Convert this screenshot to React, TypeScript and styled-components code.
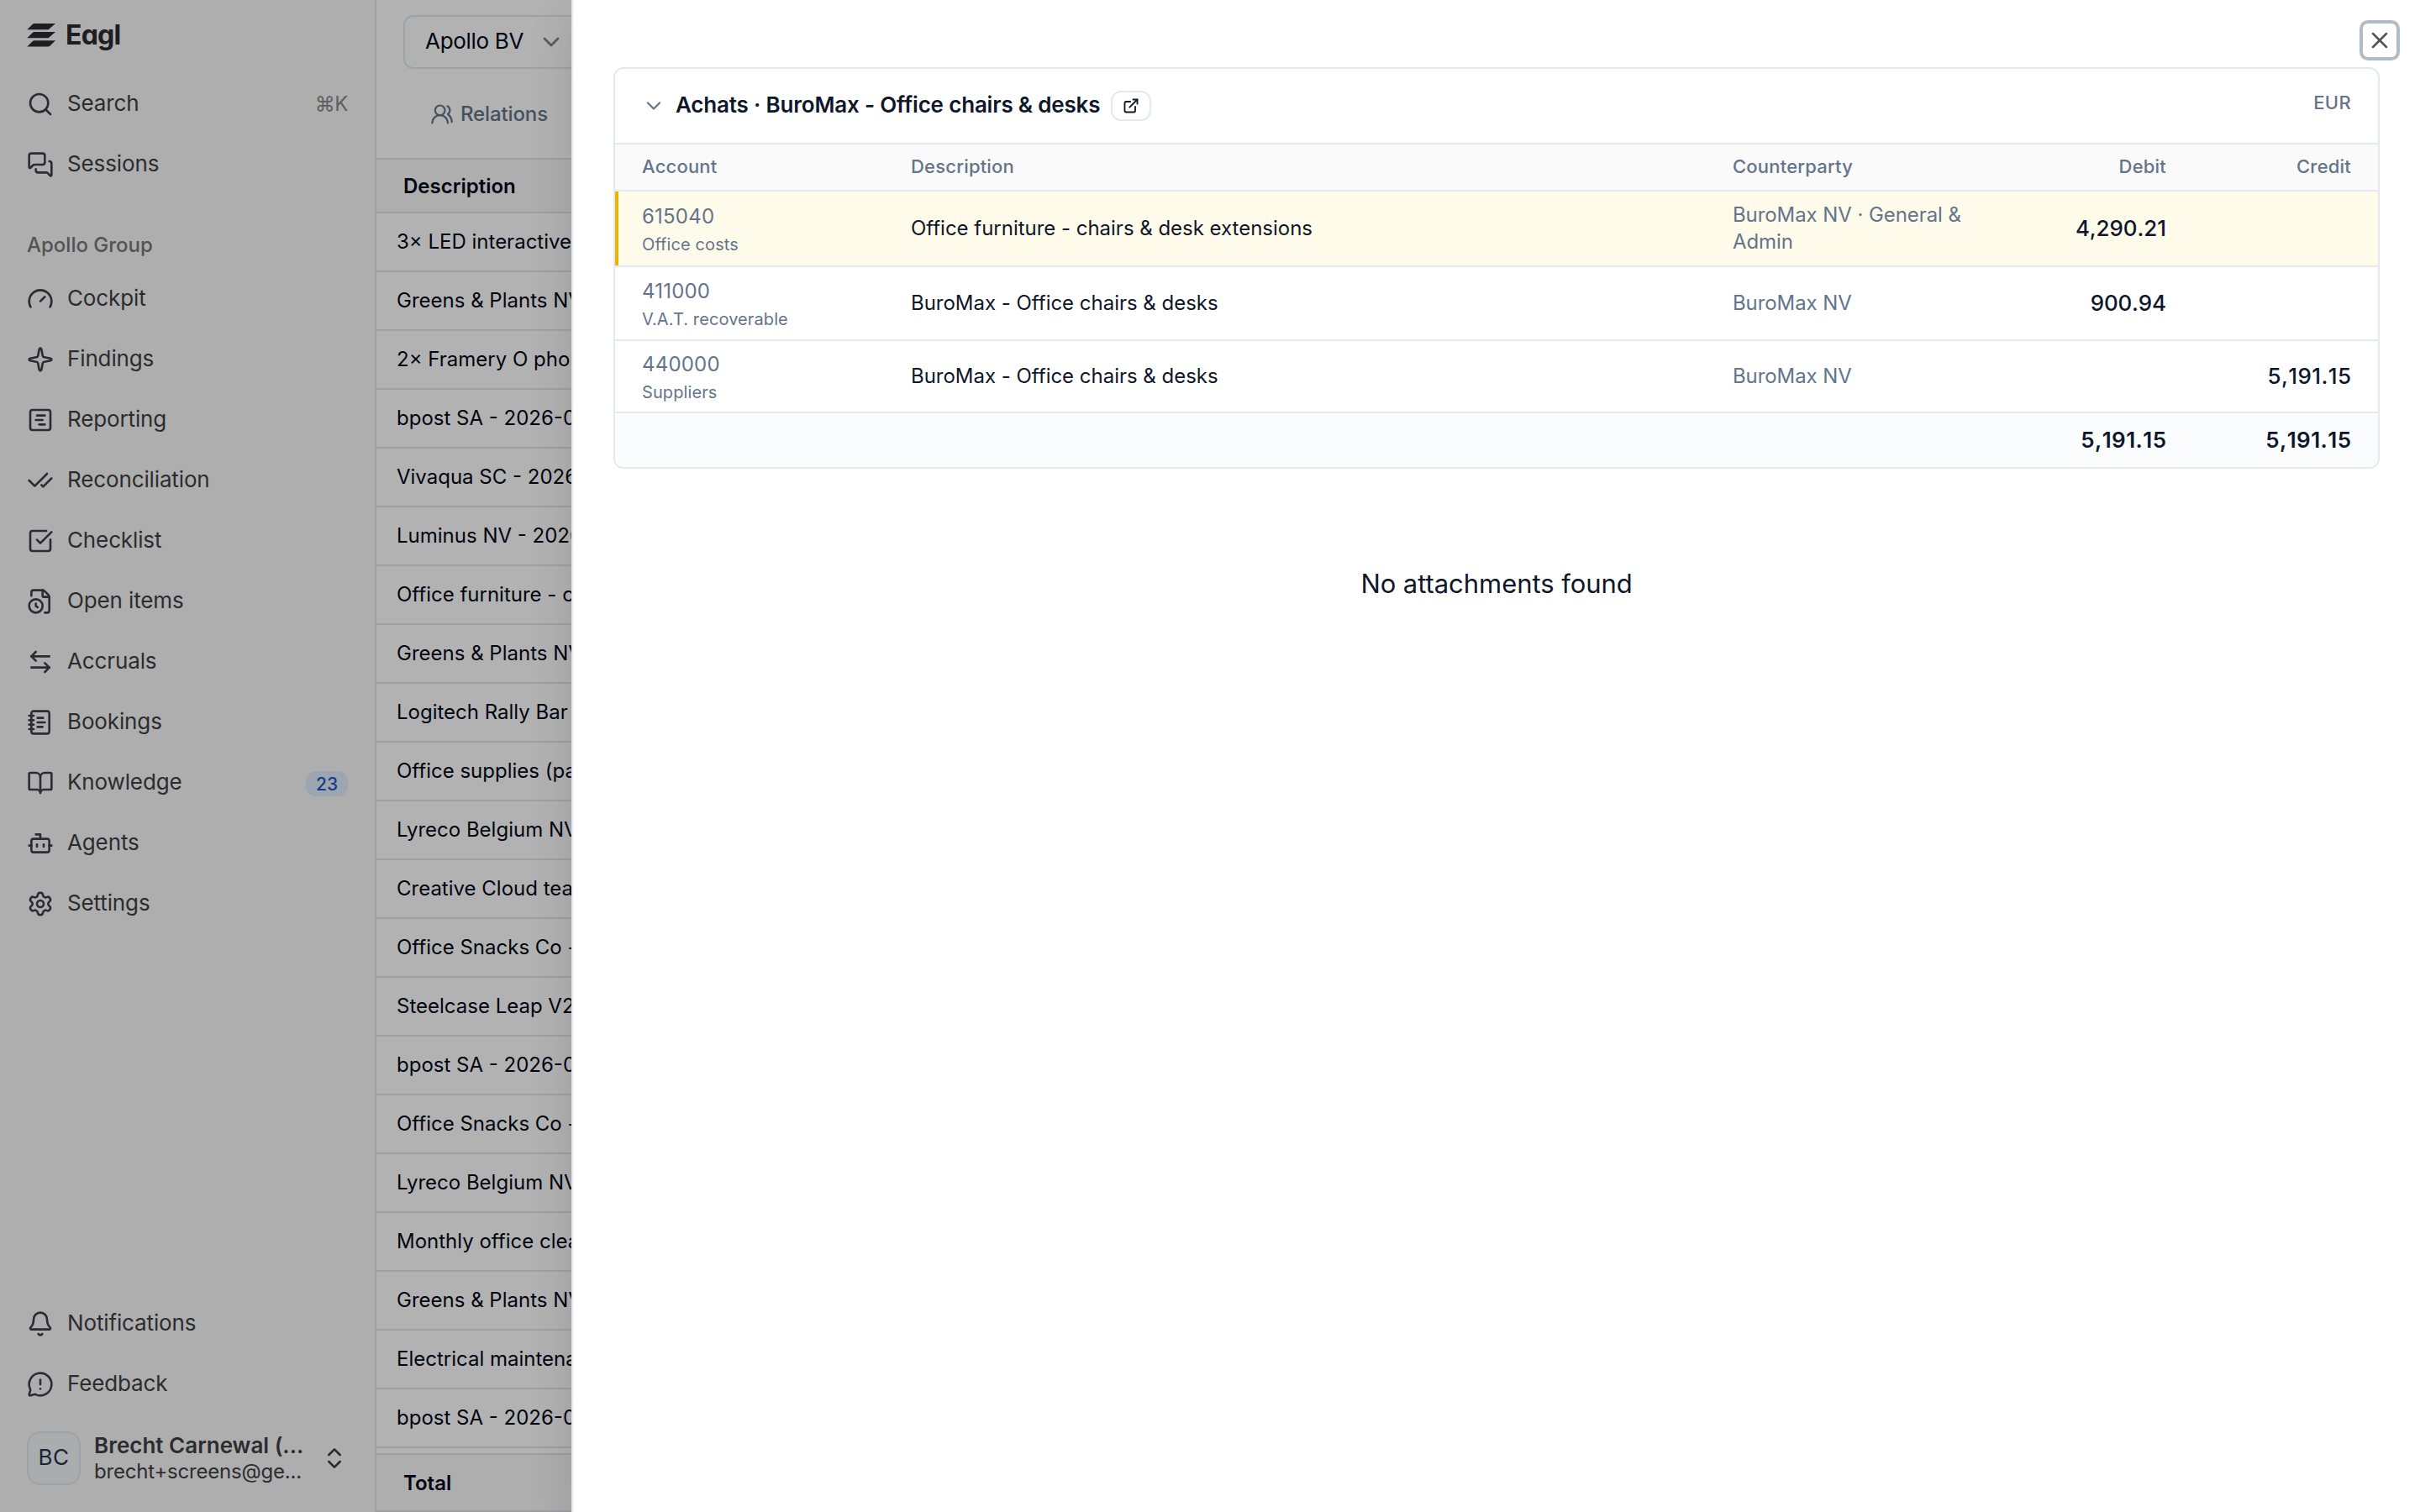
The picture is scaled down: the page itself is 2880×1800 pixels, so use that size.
import React from "react";
import styled, { createGlobalStyle } from "styled-components";
import {
  ArrowLeftRight,
  Bell,
  BookOpen,
  Bot,
  CheckCheck,
  ChevronDown,
  ChevronsUpDown,
  ExternalLink,
  FileClock,
  Gauge,
  MessageCircleWarning,
  MessagesSquare,
  NotebookText,
  Search,
  Settings,
  Sparkle,
  SquareChartGantt,
  SquareCheckBig,
  UsersRound,
  X,
  type LucideIcon,
} from "lucide-react";

const color = {
  border: "#e4e4e7",
  line: "#e5e8ec",
  ink: "#0f172a",
  dark: "#020817",
  muted: "#64748b",
  side: "#3f3f46",
};

const GlobalStyle = createGlobalStyle`
  *, *::before, *::after { box-sizing: border-box; }
  body { margin: 0; overflow: hidden; background: #fff; }
  button { font: inherit; color: inherit; background: none; border: 0; padding: 0; }
  svg { flex: none; display: block; }
`;

const Page = styled.div`
  position: relative;
  display: flex;
  width: 2880px;
  height: 1800px;
  overflow: hidden;
  font-family: Inter, "Liberation Sans", sans-serif;
  font-size: 24px;
  color: ${color.dark};
`;

/* ---------- sidebar ---------- */

const Sidebar = styled.aside`
  display: flex;
  flex-direction: column;
  flex: none;
  width: 448px;
  padding: 16px 32px 32px;
  background: #fafafa;
  border-right: 2px solid ${color.border};
  color: ${color.side};
`;

const Brand = styled.div`
  display: flex;
  align-items: center;
  gap: 10px;
  height: 52px;
  color: #2b2b31;
`;

const BrandName = styled.span`
  font-size: 32px;
  font-weight: 700;
  line-height: 52px;
  letter-spacing: -0.8px;
  font-feature-settings: "cv11";
`;

const NavList = styled.nav`
  display: flex;
  flex-direction: column;
  gap: 8px;
`;

const TopNav = styled(NavList)`
  margin-top: 24px;
`;

const BottomNav = styled(NavList)`
  margin-top: auto;
`;

const NavItem = styled.a`
  display: flex;
  align-items: center;
  gap: 16px;
  height: 64px;
`;

const NavLabel = styled.span`
  flex: 1;
  padding-bottom: 2px;
  font-size: 26px;
  letter-spacing: -0.13px;
  line-height: 36px;
`;

const Shortcut = styled.span`
  padding-bottom: 2px;
  font-size: 24px;
  letter-spacing: -0.4px;
  color: #88888e;
`;

const Badge = styled.span`
  display: grid;
  place-items: center;
  width: 50px;
  height: 30px;
  margin-top: 2px;
  border-radius: 12px;
  background: #e0edfc;
  color: #1c57cc;
  font-size: 21px;
  font-weight: 500;
`;

const GroupLabel = styled.div`
  height: 48px;
  margin: 40px 0 8px;
  font-size: 24px;
  font-weight: 500;
  line-height: 48px;
  color: #77777c;
`;

const User = styled.div`
  display: flex;
  align-items: center;
  margin-top: 24px;
`;

const Avatar = styled.div`
  display: grid;
  place-items: center;
  width: 64px;
  height: 64px;
  padding-bottom: 3px;
  border: 2px solid #e2e8f0;
  border-radius: 16px;
  background: #f4f8fb;
  color: #27344a;
  font-size: 26px;
  letter-spacing: 0.4px;
`;

const UserText = styled.div`
  display: flex;
  flex-direction: column;
  width: 254px;
  margin: 0 16px;
  padding-bottom: 2px;
`;

const UserName = styled.span`
  font-size: 26px;
  font-weight: 600;
  line-height: 34px;
  white-space: nowrap;
`;

const UserMail = styled.span`
  font-size: 24px;
  letter-spacing: -0.2px;
  line-height: 28px;
  white-space: nowrap;
`;

/* ---------- main list ---------- */

const Main = styled.main`
  display: flex;
  flex: 1;
  flex-direction: column;
  min-width: 0;
`;

const Toolbar = styled.div`
  padding: 18px 32px 0;
`;

const EntitySelect = styled.button`
  display: flex;
  align-items: center;
  gap: 17px;
  width: 400px;
  height: 64px;
  padding: 0 24px;
  border: 2px solid #e2e8f0;
  border-radius: 12px;
  font-size: 26px;
  letter-spacing: -0.3px;

  svg { color: #7e828a; }
`;

const EntityName = styled.span`
  padding-bottom: 3px;
`;

const Tabs = styled.div`
  display: flex;
  height: 106px;
  padding: 0 64px;
`;

const Tab = styled.div`
  display: flex;
  align-items: center;
  gap: 8px;
  height: 108px;
  color: ${color.muted};
  font-weight: 500;
  letter-spacing: -0.12px;
  line-height: 32px;
`;

const ListHead = styled.div`
  height: 66px;
  padding: 0 32px;
  border-top: 2px solid ${color.border};
  border-bottom: 2px solid ${color.border};
  background: #fafafa;
  font-weight: 600;
  line-height: 63px;
`;

const ListRow = styled.div`
  height: 70px;
  padding: 0 24px;
  border-bottom: 2px solid ${color.border};
  line-height: 67px;
  white-space: nowrap;
`;

const ListTotal = styled(ListHead)`
  height: 70px;
  margin-top: auto;
  line-height: 67px;
`;

/* ---------- overlay and drawer ---------- */

const Overlay = styled.div`
  position: absolute;
  inset: 0;
  background: rgba(0, 0, 0, 0.3);
`;

const Drawer = styled.section`
  position: absolute;
  inset: 0 0 0 680px;
  padding: 80px 48px 0;
  border-left: 2px solid ${color.line};
  background: #fff;
  box-shadow: 0 20px 50px rgba(0, 0, 0, 0.12);
  color: ${color.ink};
`;

const CloseButton = styled.button`
  position: absolute;
  top: 24px;
  right: 24px;
  display: grid;
  place-items: center;
  width: 48px;
  height: 48px;
  border: 4px solid #b1bcc9;
  border-radius: 10px;
  color: #4f525f;
`;

const Card = styled.div`
  overflow: hidden;
  height: 478px;
  border: 2px solid ${color.line};
  border-radius: 12px;
`;

const CardHead = styled.header`
  display: flex;
  align-items: center;
  height: 90px;
  padding: 0 32px;
  border-bottom: 2px solid ${color.line};

  > svg { color: ${color.muted}; }
`;

const CardTitle = styled.h2`
  margin: 0 13px 0 12px;
  padding-bottom: 2px;
  font-size: 26px;
  font-weight: 600;
  letter-spacing: -0.18px;
  line-height: 36px;
`;

const OpenButton = styled.button`
  display: grid;
  place-items: center;
  width: 48px;
  height: 36px;
  border: 2px solid ${color.line};
  border-radius: 12px;
`;

const Currency = styled.span`
  margin-left: auto;
  padding-bottom: 8px;
  color: ${color.muted};
  font-size: 22px;
  font-weight: 500;
  letter-spacing: 0.3px;
`;

const EntryRow = styled.div<{ $height: number; $selected?: boolean }>`
  display: grid;
  grid-template-columns: 320px 1fr 296px 220px 220px;
  align-items: center;
  height: ${(p) => p.$height}px;
  padding: 0 32px;
  border-bottom: 2px solid ${color.line};
  ${(p) => p.$selected && "background: #fffbeb; box-shadow: inset 4px 0 0 #eab308;"}
`;

const ColumnRow = styled(EntryRow)`
  background: #fafafa;
  color: ${color.muted};
  font-size: 22px;
  font-weight: 500;
  letter-spacing: 0.2px;
`;

const SumRow = styled(EntryRow)`
  border-bottom: 0;
  background: #fafcfd;
`;

const ColumnName = styled.span<{ $right?: boolean }>`
  padding-bottom: 3px;
  text-align: ${(p) => (p.$right ? "right" : "left")};
`;

const Account = styled.div`
  display: flex;
  flex-direction: column;
  padding-top: 1px;
  color: ${color.muted};
`;

const AccountCode = styled.span`
  letter-spacing: 0.2px;
  line-height: 36px;
`;

const AccountName = styled.span`
  font-size: 20px;
  letter-spacing: 0.1px;
  line-height: 30px;
`;

const Cell = styled.span`
  padding-bottom: 1px;
  letter-spacing: -0.02px;
  line-height: 32px;
`;

const PartyCell = styled(Cell)`
  color: ${color.muted};
  letter-spacing: -0.08px;
`;

const Amount = styled.span<{ $track: number; $bold?: boolean }>`
  padding-bottom: 2px;
  margin-right: ${(p) => -p.$track}px;
  font-size: 26px;
  font-weight: ${(p) => (p.$bold ? 600 : 500)};
  font-kerning: none;
  letter-spacing: ${(p) => p.$track}px;
  text-align: right;
`;

const Empty = styled.p`
  margin: 117px 0 0;
  font-size: 31px;
  letter-spacing: -0.06px;
  line-height: 40px;
  text-align: center;
`;

/* ---------- data ---------- */

type Item = { icon: LucideIcon; label: string; shortcut?: string; badge?: string };

const topItems: Item[] = [
  { icon: Search, label: "Search", shortcut: "⌘K" },
  { icon: MessagesSquare, label: "Sessions" },
];

const groupItems: Item[] = [
  { icon: Gauge, label: "Cockpit" },
  { icon: Sparkle, label: "Findings" },
  { icon: SquareChartGantt, label: "Reporting" },
  { icon: CheckCheck, label: "Reconciliation" },
  { icon: SquareCheckBig, label: "Checklist" },
  { icon: FileClock, label: "Open items" },
  { icon: ArrowLeftRight, label: "Accruals" },
  { icon: NotebookText, label: "Bookings" },
  { icon: BookOpen, label: "Knowledge", badge: "23" },
  { icon: Bot, label: "Agents" },
  { icon: Settings, label: "Settings" },
];

const bottomItems: Item[] = [
  { icon: Bell, label: "Notifications" },
  { icon: MessageCircleWarning, label: "Feedback" },
];

const bookings = [
  "3× LED interactive",
  "Greens & Plants NV",
  "2× Framery O phone",
  "bpost SA - 2026-01",
  "Vivaqua SC - 2026-",
  "Luminus NV - 2026",
  "Office furniture - ch",
  "Greens & Plants NV",
  "Logitech Rally Bar",
  "Office supplies (pap",
  "Lyreco Belgium NV",
  "Creative Cloud team",
  "Office Snacks Co - ",
  "Steelcase Leap V2",
  "bpost SA - 2026-01",
  "Office Snacks Co - ",
  "Lyreco Belgium NV",
  "Monthly office clean",
  "Greens & Plants NV",
  "Electrical maintenan",
  "bpost SA - 2026-01",
];

type Entry = {
  code: string;
  name: string;
  text: string;
  party: string;
  debit?: string;
  credit?: string;
  height: number;
  track: number;
  selected?: boolean;
};

const entries: Entry[] = [
  {
    code: "615040",
    name: "Office costs",
    text: "Office furniture - chairs & desk extensions",
    party: "BuroMax NV · General & Admin",
    debit: "4,290.21",
    height: 90,
    track: -0.1,
    selected: true,
  },
  {
    code: "411000",
    name: "V.A.T. recoverable",
    text: "BuroMax - Office chairs & desks",
    party: "BuroMax NV",
    debit: "900.94",
    height: 88,
    track: -0.2,
  },
  {
    code: "440000",
    name: "Suppliers",
    text: "BuroMax - Office chairs & desks",
    party: "BuroMax NV",
    credit: "5,191.15",
    height: 86,
    track: 0.4,
  },
];

/* ---------- parts ---------- */

const BrandMark = () => (
  <svg width="36" height="28" viewBox="0 0 36 28" fill="currentColor">
    <path d="M9 0H34L25.600 7.200H.3L6.400 1.200Q7.600 0 9 0Z" />
    <path d="M9 10.100H34L25.600 17.300H.3L6.400 11.300Q7.600 10.100 9 10.100Z" />
    <path d="M9 20.200H34L27.600 26.400Q26.400 27.500 25 27.500H.3L6.400 21.400Q7.600 20.200 9 20.200Z" />
  </svg>
);

const renderItem = ({ icon: Icon, label, shortcut, badge }: Item) => (
  <NavItem key={label}>
    <Icon size={32} strokeWidth={1.95} />
    <NavLabel>{label}</NavLabel>
    {shortcut && <Shortcut>{shortcut}</Shortcut>}
    {badge && <Badge>{badge}</Badge>}
  </NavItem>
);

export default function App() {
  return (
    <>
      <GlobalStyle />
      <Page>
        <Sidebar>
          <Brand>
            <BrandMark />
            <BrandName>Eagl</BrandName>
          </Brand>
          <TopNav>{topItems.map(renderItem)}</TopNav>
          <GroupLabel>Apollo Group</GroupLabel>
          <NavList>{groupItems.map(renderItem)}</NavList>
          <BottomNav>{bottomItems.map(renderItem)}</BottomNav>
          <User>
            <Avatar>BC</Avatar>
            <UserText>
              <UserName>Brecht Carnewal (...</UserName>
              <UserMail>brecht+screens@ge...</UserMail>
            </UserText>
            <ChevronsUpDown size={32} strokeWidth={1.95} />
          </User>
        </Sidebar>

        <Main>
          <Toolbar>
            <EntitySelect>
              <EntityName>Apollo BV</EntityName>
              <ChevronDown size={32} strokeWidth={2} />
            </EntitySelect>
          </Toolbar>
          <Tabs>
            <Tab>
              <UsersRound size={28} strokeWidth={1.9} />
              Relations
            </Tab>
          </Tabs>
          <ListHead>Description</ListHead>
          {bookings.map((text, i) => (
            <ListRow key={i}>{text}</ListRow>
          ))}
          <ListTotal>Total</ListTotal>
        </Main>

        <Overlay />

        <Drawer>
          <CloseButton aria-label="Close">
            <X size={32} strokeWidth={1.9} />
          </CloseButton>
          <Card>
            <CardHead>
              <ChevronDown size={28} strokeWidth={1.9} />
              <CardTitle>Achats · BuroMax - Office chairs &amp; desks</CardTitle>
              <OpenButton aria-label="Open entry">
                <ExternalLink size={20} strokeWidth={2.2} />
              </OpenButton>
              <Currency>EUR</Currency>
            </CardHead>
            <ColumnRow $height={56}>
              <ColumnName>Account</ColumnName>
              <ColumnName>Description</ColumnName>
              <ColumnName>Counterparty</ColumnName>
              <ColumnName $right>Debit</ColumnName>
              <ColumnName $right>Credit</ColumnName>
            </ColumnRow>
            {entries.map((e) => (
              <EntryRow key={e.code} $height={e.height} $selected={e.selected}>
                <Account>
                  <AccountCode>{e.code}</AccountCode>
                  <AccountName>{e.name}</AccountName>
                </Account>
                <Cell>{e.text}</Cell>
                <PartyCell>{e.party}</PartyCell>
                <Amount $track={e.track}>{e.debit}</Amount>
                <Amount $track={e.track}>{e.credit}</Amount>
              </EntryRow>
            ))}
            <SumRow $height={64}>
              <span />
              <span />
              <span />
              <Amount $track={0.4} $bold>5,191.15</Amount>
              <Amount $track={0.4} $bold>5,191.15</Amount>
            </SumRow>
          </Card>
          <Empty>No attachments found</Empty>
        </Drawer>
      </Page>
    </>
  );
}
